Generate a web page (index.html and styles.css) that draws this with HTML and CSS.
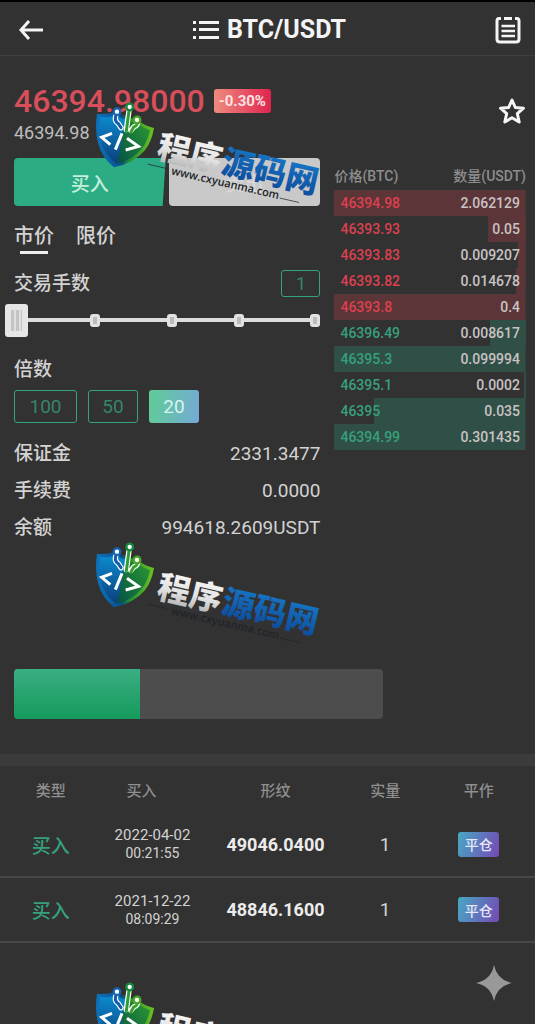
FILE: index.html
```html
<!DOCTYPE html>
<html lang="zh-CN">
<head>
    <meta charset="UTF-8">
    <meta name="viewport" content="width=device-width, initial-scale=1.0">
    <title>BTC/USDT</title>
    <link rel="stylesheet" href="styles.css">
</head>
<body>
    <header class="topbar">
        <button class="icon-btn back" aria-label="返回">
            <svg width="26" height="24" viewBox="0 0 26 24"><path d="M11 3 L3 12 L11 21 M3 12 H25" fill="none" stroke="#f4f4f4" stroke-width="3"/></svg>
        </button>
        <h1 class="pair">
            <svg width="26" height="20" viewBox="0 0 26 20" fill="#f4f4f4">
                <rect x="0" y="1" width="3" height="3"/><rect x="0" y="8" width="3" height="3"/><rect x="0" y="16" width="3" height="3"/>
                <rect x="6" y="1" width="20" height="3"/><rect x="6" y="8" width="20" height="3"/><rect x="6" y="16" width="20" height="3"/>
            </svg>
            BTC/USDT
        </h1>
        <button class="icon-btn" aria-label="订单">
            <svg width="26" height="28" viewBox="0 0 26 28" fill="none" stroke="#f4f4f4" stroke-width="3">
                <path d="M6 2.5 H4 Q2 2.5 2 5 V23 Q2 26 5 26 H21 Q24 26 24 23 V5 Q24 2.5 22 2.5 H20"/>
                <path d="M9 2.5 H17" />
                <path d="M6.500 10 H20 M6.500 15 H20 M6.500 20 H20" stroke-width="2.500"/>
            </svg>
        </button>
    </header>

    <main class="trade">
        <section class="order">
            <div class="price-row">
                <span class="price">46394.98000</span>
                <span class="change">-0.30%</span>
            </div>
            <div class="sub-price">46394.98</div>

            <div class="sides">
                <button class="side buy">买入</button>
                <button class="side sell">卖出</button>
            </div>

            <nav class="tabs">
                <a href="#" class="tab active">市价</a>
                <a href="#" class="tab">限价</a>
            </nav>

            <div class="line lots">
                <label for="lots">交易手数</label>
                <input id="lots" class="lots-input" type="text" value="1">
            </div>

            <div class="slider">
                <div class="ticks"><i></i><i></i><i></i><i></i></div>
                <input class="range" type="range" min="0" max="100" value="0" aria-label="交易手数">
            </div>

            <div class="line">倍数</div>
            <div class="levers">
                <button class="lever wide">100</button>
                <button class="lever">50</button>
                <button class="lever selected">20</button>
            </div>

            <div class="line info"><span>保证金</span><span class="value">2331.3477</span></div>
            <div class="line info"><span>手续费</span><span class="value">0.0000</span></div>
            <div class="line info"><span>余额</span><span class="value">994618.2609USDT</span></div>
        </section>

        <section class="market">
            <button class="icon-btn star" aria-label="收藏">
                <svg width="28" height="28" viewBox="0 0 28 28"><path d="M14 3 L17.300 10.500 L25.500 11.200 L19.300 16.700 L21.200 25 L14 20.700 L6.800 25 L8.700 16.700 L2.500 11.200 L10.700 10.500 Z" fill="none" stroke="#f6f6f6" stroke-width="3" stroke-linejoin="round"/></svg>
            </button>
            <table class="book">
                <thead>
                    <tr><th>价格(BTC)</th><th>数量(USDT)</th></tr>
                </thead>
                <tbody>
                    <tr class="ask" style="--depth: 100%"><td>46394.98</td><td>2.062129</td></tr>
                    <tr class="ask" style="--depth: 20%"><td>46393.93</td><td>0.05</td></tr>
                    <tr class="ask" style="--depth: 4%"><td>46393.83</td><td>0.009207</td></tr>
                    <tr class="ask" style="--depth: 5%"><td>46393.82</td><td>0.014678</td></tr>
                    <tr class="ask" style="--depth: 100%"><td>46393.8</td><td>0.4</td></tr>
                    <tr class="bid" style="--depth: 19%"><td>46396.49</td><td>0.008617</td></tr>
                    <tr class="bid" style="--depth: 100%"><td>46395.3</td><td>0.099994</td></tr>
                    <tr class="bid" style="--depth: 1%"><td>46395.1</td><td>0.0002</td></tr>
                    <tr class="bid" style="--depth: 79%"><td>46395</td><td>0.035</td></tr>
                    <tr class="bid" style="--depth: 100%"><td>46394.99</td><td>0.301435</td></tr>
                </tbody>
            </table>
        </section>
    </main>

    <div class="progress">
        <div class="progress-fill" style="width: 34%"></div>
    </div>

    <section class="positions">
        <table class="pos-table">
            <thead>
                <tr>
                    <th class="c-type">类型</th>
                    <th class="c-time">买入</th>
                    <th class="c-price">形纹</th>
                    <th class="c-qty">实量</th>
                    <th>平作</th>
                </tr>
            </thead>
            <tbody>
                <tr>
                    <td class="type">买入</td>
                    <td class="time">2022-04-02<br><span>00:21:55</span></td>
                    <td class="cost">49046.0400</td>
                    <td>1</td>
                    <td><button class="close-btn">平仓</button></td>
                </tr>
                <tr>
                    <td class="type">买入</td>
                    <td class="time">2021-12-22<br><span>08:09:29</span></td>
                    <td class="cost">48846.1600</td>
                    <td>1</td>
                    <td><button class="close-btn">平仓</button></td>
                </tr>
            </tbody>
        </table>
    </section>

    <svg class="sparkle" width="36" height="36" viewBox="0 0 36 36"><path d="M18 0 Q21 15 36 18 Q21 21 18 36 Q15 21 0 18 Q15 15 18 0 Z" fill="#999"/></svg>

    <!-- site stamp, repeated down the page -->
    <div class="stamps" aria-hidden="true">
        <svg class="stamp" viewBox="0 0 735 330">
            <defs>
                <linearGradient id="rim" x1="0" y1="0" x2="1" y2="0">
                    <stop offset="0" stop-color="#0b74bd"/><stop offset="0.450" stop-color="#0a4f8c"/><stop offset="0.550" stop-color="#1d8a35"/><stop offset="1" stop-color="#6fc021"/>
                </linearGradient>
                <linearGradient id="blue" x1="0" y1="0" x2="0" y2="1">
                    <stop offset="0" stop-color="#0b8ad0"/><stop offset="1" stop-color="#0b3f78"/>
                </linearGradient>
                <linearGradient id="green" x1="0" y1="1" x2="1" y2="0">
                    <stop offset="0" stop-color="#06504a"/><stop offset="1" stop-color="#2b9a2e"/>
                </linearGradient>
                <linearGradient id="silver" x1="0" y1="0" x2="0" y2="1">
                    <stop offset="0" stop-color="#ffffff"/><stop offset="0.600" stop-color="#e2e2e2"/><stop offset="1" stop-color="#a5a5a5"/>
                </linearGradient>
                <linearGradient id="word" x1="0" y1="0" x2="0" y2="1">
                    <stop offset="0" stop-color="#1a7fd0"/><stop offset="1" stop-color="#0c4796"/>
                </linearGradient>
                <g id="mark">
                    <path d="M36 56 Q60 60 86 52 L160 76 Q180 94 207 99 Q200 140 180 166 Q145 206 87 217 Q52 190 39 144 Q29 100 36 56 Z" fill="url(#rim)"/>
                    <path d="M45 66 Q70 68 88 62 L124 74 L96 207 Q60 182 48 140 Q40 105 45 66 Z" fill="url(#blue)"/>
                    <path d="M124 74 L160 88 Q176 101 195 105 Q188 138 172 159 Q142 195 96 207 Z" fill="url(#green)"/>
                    <g fill="none" stroke="#fff" stroke-width="16" stroke-linecap="round">
                        <path d="M96 54 Q84 76 100 86 L108 98"/><path d="M133 40 L124 104"/><path d="M156 78 Q160 92 146 96 L138 106"/>
                    </g>
                    <g fill="none" stroke-width="9" stroke-linecap="round">
                        <path d="M96 54 Q84 76 100 86 L108 98" stroke="#155aa5"/><path d="M133 40 L124 108" stroke="#2d9c38"/><path d="M156 78 Q160 92 146 96 L138 110" stroke="#3b9f2c"/>
                    </g>
                    <g fill="#fff" stroke-width="7">
                        <circle cx="96" cy="50" r="10" stroke="#1664b4"/><circle cx="134" cy="36" r="10" stroke="#158a3d"/><circle cx="156" cy="75" r="10" stroke="#4aa52b"/>
                    </g>
                    <path d="M81 115 L50 127 L76 149 M111 115 L91 164 M126 130 L160 154 L122 165" fill="none" stroke="#fff" stroke-width="9"/>
                    <g transform="rotate(13 210 195)">
                        <g class="stamp-name" fill="url(#silver)"><text x="210" y="187">程序</text></g>
                        <g class="stamp-name" fill="url(#word)"><text x="408" y="187">源码网</text></g>
                        <path d="M192 212 H252 M600 222 H660" stroke="#20242a" stroke-width="2"/>
                        <text class="stamp-url" x="266" y="226">www.cxyuanma.com</text>
                    </g>
                </g>
            </defs>
            <use href="#mark"/>
        </svg>
        <svg class="stamp" viewBox="0 0 735 330"><use href="#mark"/></svg>
        <svg class="stamp" viewBox="0 0 735 330"><use href="#mark"/></svg>
    </div>
</body>
</html>
```
FILE: styles.css
```css
* {
    box-sizing: border-box;
}

body {
    margin: 0;
    min-height: 100vh;
    position: relative;
    overflow-x: hidden;
    background: #323232;
    border-top: 2px solid #000;
    color: #d2d2d2;
    font-family: Roboto, "Noto Sans CJK SC", sans-serif;
    font-size: 19px;
}

button,
input {
    font-family: inherit;
    margin: 0;
    padding: 0;
}

button {
    border: none;
    background: none;
    cursor: pointer;
}

.icon-btn {
    display: flex;
}

/* header */
.topbar {
    display: flex;
    justify-content: space-between;
    align-items: center;
    height: 54px;
    padding: 2px 14px 0 18px;
    border-bottom: 1px solid #3f3f3f;
}

.pair {
    display: flex;
    align-items: center;
    gap: 8px;
    margin: 0;
    color: #f4f4f4;
    font-size: 25px;
    font-weight: 700;
}

/* order form + book */
.trade {
    display: grid;
    grid-template-columns: 1.6fr 1fr;
    gap: 14px;
    padding: 25px 9px 0 14px;
}

.price-row {
    display: flex;
    align-items: center;
    gap: 9px;
    height: 40px;
}

.price {
    color: #d94e5b;
    font-size: 32px;
    font-weight: 500;
}

.change {
    padding: 0 5px;
    border-radius: 3px;
    background: linear-gradient(90deg, #ee8b7e, #e0244f);
    color: #fbe3e3;
    font-size: 15px;
    font-weight: 700;
    line-height: 24px;
}

.sub-price {
    color: #bdbdbd;
    font-size: 18px;
    line-height: 24px;
}

.sides {
    display: flex;
    gap: 3px;
    height: 48px;
    margin-top: 13px;
}

.side {
    flex: 1;
    border-radius: 4px;
    font-size: 19px;
    font-weight: 500;
}

.buy {
    background: #2cac85;
    color: #c4efdc;
    clip-path: polygon(0 0, 100% 0, 98% 100%, 0 100%);
}

.sell {
    background: #c9c9c9;
    color: #d9d9d9;
}

.tabs {
    display: flex;
    gap: 22px;
    height: 48px;
    margin-top: 16px;
}

.tab {
    color: #d2d2d2;
    font-size: 20px;
    font-weight: 500;
    line-height: 28px;
    text-decoration: none;
}

.active::after {
    content: "";
    display: block;
    width: 28px;
    height: 3px;
    margin: 1px auto 0;
    background: #eee;
}

.line {
    display: flex;
    justify-content: space-between;
    align-items: center;
    font-weight: 500;
    line-height: 26px;
}

.value {
    font-weight: 400;
}

.lots-input {
    width: 39px;
    height: 27px;
    border: 1px solid #36a37f;
    border-radius: 3px;
    background: none;
    color: #35856b;
    font-size: 18px;
    text-align: center;
}

.slider {
    display: grid;
    align-items: center;
    height: 34px;
    margin: 6px 0 20px -9px;
}

.ticks,
.range {
    grid-area: 1 / 1;
}

.ticks {
    display: grid;
    grid-template-columns: 95fr 77fr 67fr 76fr;
    align-items: center;
    background: linear-gradient(#dcdcdc, #dcdcdc) center / 100% 4px no-repeat;
}

.ticks i {
    justify-self: end;
    width: 10px;
    height: 13px;
    border: 3px solid #e2e2e2;
    border-radius: 3px;
    background: #bbb;
}

.range {
    appearance: none;
    width: 100%;
    height: 34px;
    background: none;
}

.range::-webkit-slider-thumb {
    appearance: none;
    width: 23px;
    height: 33px;
    border: 6px solid #e6e6e6;
    border-radius: 3px;
    background: repeating-linear-gradient(90deg, #c4c4c4 0 3px, #e0e0e0 3px 5px);
}

.levers {
    display: flex;
    gap: 11px;
    margin: 7px 0 12px;
}

.lever {
    width: 50px;
    height: 33px;
    border: 1px solid #36a37f;
    border-radius: 3px;
    color: #35856b;
    font-size: 19px;
}

.wide {
    width: 63px;
}

.selected {
    border: none;
    background: linear-gradient(100deg, #5fcd95, #75a9d6);
    color: #d6f5ec;
}

.info {
    height: 37px;
}

/* order book */
.market {
    display: flex;
    flex-direction: column;
}

.star {
    align-self: flex-end;
    margin-top: 16px;
}

.book {
    width: 100%;
    margin-top: 36px;
    border-collapse: collapse;
    font-size: 14px;
}

.book th {
    height: 29px;
    padding: 0 0 2px;
    color: #8d8d8d;
    font-weight: 500;
    text-align: left;
    white-space: nowrap;
}

.book td {
    height: 26px;
    padding: 0 6px;
    color: #c9c3c3;
    font-weight: 500;
}

.book th:last-child,
.book td:last-child {
    text-align: right;
}

.ask,
.bid {
    background: linear-gradient(var(--shade), var(--shade)) right / var(--depth) 100% no-repeat;
}

.ask {
    --shade: #5c3538;
}

.bid {
    --shade: #304f47;
}

.ask td:first-child {
    color: #dc414e;
}

.bid td:first-child {
    color: #36a07c;
}

/* progress */
.progress {
    width: 69%;
    height: 50px;
    margin: 123px 0 35px 14px;
    overflow: hidden;
    border-radius: 4px;
    background: #4d4d4d;
}

.progress-fill {
    height: 100%;
    background: linear-gradient(#3aae83, #159a5c);
}

/* positions */
.positions {
    border-top: 12px solid #3b3b3b;
}

.pos-table {
    width: 100%;
    table-layout: fixed;
    border-collapse: collapse;
    text-align: center;
}

.pos-table th {
    height: 46px;
    padding: 0;
    color: #8f8f8f;
    font-size: 15px;
    font-weight: 500;
    white-space: nowrap;
}

.pos-table td {
    height: 65px;
    padding: 0;
    border-bottom: 2px solid #464848;
}

.c-type { width: 19%; }
.c-time { width: 19%; }
.c-price { width: 27%; }
.c-qty { width: 14%; }

.pos-table .c-time {
    padding-right: 22px;
}

.pos-table .type {
    color: #36a07c;
    font-weight: 500;
}

.pos-table .time {
    font-size: 15px;
    line-height: 18px;
}

.time span {
    font-size: 14px;
}

.pos-table .cost {
    color: #ececec;
    font-size: 18px;
    font-weight: 700;
}

.close-btn {
    width: 41px;
    height: 25px;
    border-radius: 3px;
    background: linear-gradient(110deg, #47a9c4, #7548b4);
    color: #e8e6fa;
    font-size: 14px;
    font-weight: 500;
    vertical-align: middle;
}

.sparkle {
    position: absolute;
    right: 23px;
    bottom: 23px;
}

/* stamps */
.stamps {
    position: absolute;
    top: -2px;
    right: 0;
    bottom: 0;
    left: 0;
    display: flex;
    flex-direction: column;
    gap: 330px;
    padding: 95px 0 0 85px;
    overflow: hidden;
    pointer-events: none;
}

.stamp {
    flex: none;
    width: 245px;
    height: 110px;
}

.stamp-name {
    font-family: "Noto Sans CJK SC", sans-serif;
    font-size: 98px;
    font-weight: 900;
}

.stamp-url {
    fill: #20242a;
    font-family: "Open Sans", sans-serif;
    font-size: 33px;
    font-weight: 600;
}
```
